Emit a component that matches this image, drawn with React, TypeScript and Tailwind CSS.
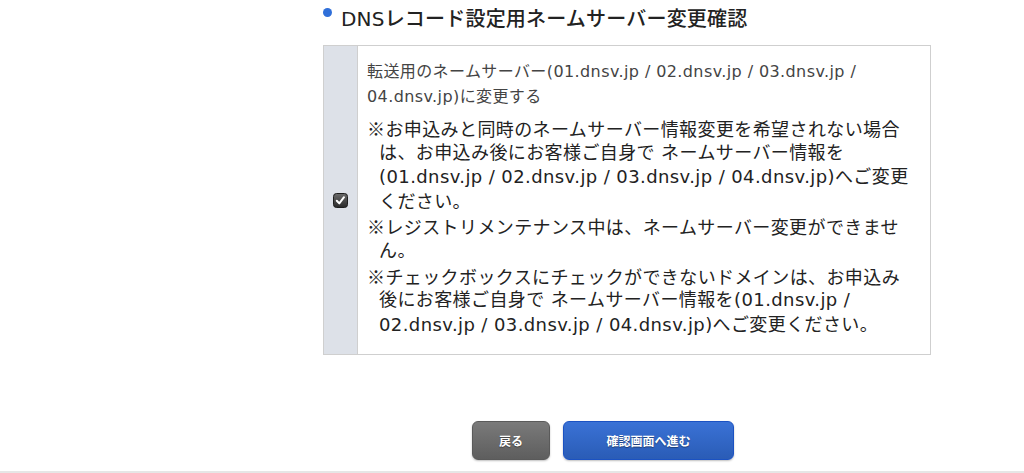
import React from "react";

const kome = <span className="font-['Noto_Sans_CJK_JP']">※</span>;

function Note({ lines }: { lines: React.ReactNode[] }) {
  return (
    <div>
      {lines.map((l, i) => (
        <div
          key={i}
          className={
            i === 0
              ? "h-[24.6px] overflow-visible whitespace-nowrap"
              : "h-[24.6px] overflow-visible whitespace-nowrap pl-[12px]"
          }
        >
          {l}
        </div>
      ))}
    </div>
  );
}

function CheckIcon() {
  return (
    <svg width="15" height="15" viewBox="0 0 15 15">
      <defs>
        <linearGradient id="cbg" x1="0" y1="0" x2="0" y2="1">
          <stop offset="0" stopColor="#6a6a6a" />
          <stop offset="1" stopColor="#2a2a2a" />
        </linearGradient>
      </defs>
      <rect x="0.5" y="0.5" width="14" height="14" rx="3" fill="url(#cbg)" stroke="#1e1e1e" />
      <path d="M3.8 7.8 L6.3 10.4 L11 4.2" fill="none" stroke="#ffffff" strokeWidth="2" strokeLinecap="round" strokeLinejoin="round" />
    </svg>
  );
}

export default function App() {
  return (
    <div className="w-[1024px] h-[473px] bg-white flex flex-col overflow-hidden font-['DejaVu_Sans','Noto_Sans_CJK_JP',sans-serif] text-[#333]">
      <div className="pl-[323px]">
        <div className="h-[45px] flex items-start">
          <span className="mt-[8px] w-[9px] h-[9px] rounded-full bg-[#2f6fd9] shrink-0" />
          <span className="ml-[9px] mt-[4px] text-[20px] leading-[30px] tracking-[0.2px] font-medium text-[#222] whitespace-nowrap">
            DNSレコード設定用ネームサーバー変更確認
          </span>
        </div>
        <div className="w-[608px] border border-[#cfcfcf] flex">
          <div className="w-[34px] shrink-0 bg-[#dde1e8] border-r border-[#cfcfcf] flex items-center justify-center">
            <CheckIcon />
          </div>
          <div className="flex-1 pl-[9px] pt-[13px] pb-[17px]">
            <div className="text-[16px] leading-[25px] text-[#444] tracking-[0.4px]">
              <div className="h-[25px] whitespace-nowrap">転送用のネームサーバー(01.dnsv.jp / 02.dnsv.jp / 03.dnsv.jp /</div>
              <div className="h-[25px] whitespace-nowrap">04.dnsv.jp)に変更する</div>
            </div>
            <div className="mt-[7px] text-[18px] leading-[24.6px] tracking-[0.4px] text-[#222]">
              <Note
                lines={[
                  <>{kome}お申込みと同時のネームサーバー情報変更を希望されない場合</>,
                  "は、お申込み後にお客様ご自身で ネームサーバー情報を",
                  "(01.dnsv.jp / 02.dnsv.jp / 03.dnsv.jp / 04.dnsv.jp)へご変更",
                  "ください。",
                ]}
              />
              <Note
                lines={[
                  <>{kome}レジストリメンテナンス中は、ネームサーバー変更ができませ</>,
                  "ん。",
                ]}
              />
              <Note
                lines={[
                  <>{kome}チェックボックスにチェックができないドメインは、お申込み</>,
                  "後にお客様ご自身で ネームサーバー情報を(01.dnsv.jp /",
                  "02.dnsv.jp / 03.dnsv.jp / 04.dnsv.jp)へご変更ください。",
                ]}
              />
            </div>
          </div>
        </div>
      </div>
      <div className="mt-[66px] pl-[472px] flex gap-[13px]">
        <button className="w-[78px] h-[39px] rounded-[6px] border border-[#5a5a5a] bg-gradient-to-b from-[#7a7a7a] to-[#5e5e5e] text-white text-[12px] font-bold shadow-[0_1px_2px_rgba(0,0,0,0.25)] [text-shadow:0_1px_1px_rgba(0,0,0,0.4)] font-['Noto_Sans_CJK_JP',sans-serif]">
          戻る
        </button>
        <button className="w-[171px] h-[39px] rounded-[6px] border border-[#1b52c2] bg-gradient-to-b from-[#3a72d6] to-[#2a5cb6] text-white text-[12px] font-bold shadow-[0_1px_2px_rgba(0,0,0,0.25)] [text-shadow:0_1px_1px_rgba(0,0,0,0.4)] font-['Noto_Sans_CJK_JP',sans-serif]">
          確認画面へ進む
        </button>
      </div>
      <div className="mt-auto h-[2px] bg-[#e6e6e6]" />
    </div>
  );
}
